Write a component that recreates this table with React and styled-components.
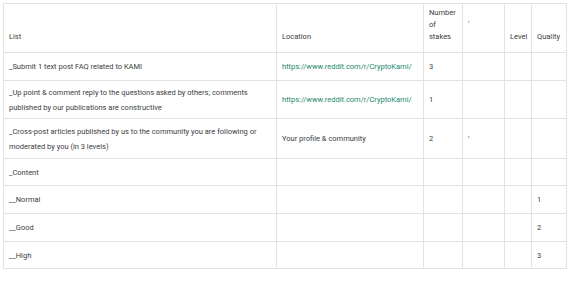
import React from "react";
import styled, { createGlobalStyle } from "styled-components";

const Global = createGlobalStyle`
  html, body { margin: 0; padding: 0; background: #ffffff; }
  body { padding: 3px 0 0 3px; font-family: Roboto, "Liberation Sans", Arial, sans-serif; }
`;

const Table = styled.table`
  border-collapse: collapse;
  table-layout: fixed;
  width: 563px;
  font-size: 7.5px;
  color: #3c3c3c;
`;

const Row = styled.tr`
  height: ${(p) => p.$h}px;
`;

const Head = styled.th`
  border: 1px solid #e2e2e2;
  font-weight: 400;
  text-align: left;
  vertical-align: ${(p) => (p.$middle ? "middle" : "bottom")};
  padding: 0 5px 9px 5px;
  line-height: 12px;
`;

const Cell = styled.td`
  border: 1px solid #e2e2e2;
  vertical-align: middle;
  padding: 0 5px;
  line-height: 15px;
  color: ${(p) => (p.$link ? "#1a8a6c" : "#3c3c3c")};
`;

const cols = [273, 147, 39, 42, 27, 35];

const rows = [
  { h: 28, cells: ["_Submit 1 text post FAQ related to KAMI", { link: "https://www.reddit.com/r/CryptoKami/" }, "3", "", "", ""] },
  { h: 38, cells: ["_Up point & comment reply to the questions asked by others; comments published by our publications are constructive", { link: "https://www.reddit.com/r/CryptoKami/" }, "1", "", "", ""] },
  { h: 40, cells: ["_Cross-post articles published by us to the community you are following or moderated by you (in 3 levels)", "Your profile & community", "2", "'", "", ""] },
  { h: 27, cells: ["_Content", "", "", "", "", ""] },
  { h: 28, cells: ["__Normal", "", "", "", "", "1"] },
  { h: 28, cells: ["__Good", "", "", "", "", "2"] },
  { h: 27, cells: ["__High", "", "", "", "", "3"] },
];

export default function App() {
  return (
    <>
      <Global />
      <Table>
        <colgroup>
          {cols.map((w, i) => (
            <col key={i} style={{ width: w }} />
          ))}
        </colgroup>
        <thead>
          <Row $h={49}>
            <Head>List</Head>
            <Head>Location</Head>
            <Head>Number of stakes</Head>
            <Head $middle>'</Head>
            <Head>Level</Head>
            <Head>Quality</Head>
          </Row>
        </thead>
        <tbody>
          {rows.map((r, i) => (
            <Row key={i} $h={r.h}>
              {r.cells.map((c, j) =>
                typeof c === "object" ? (
                  <Cell key={j} $link>{c.link}</Cell>
                ) : (
                  <Cell key={j}>{c}</Cell>
                )
              )}
            </Row>
          ))}
        </tbody>
      </Table>
    </>
  );
}
